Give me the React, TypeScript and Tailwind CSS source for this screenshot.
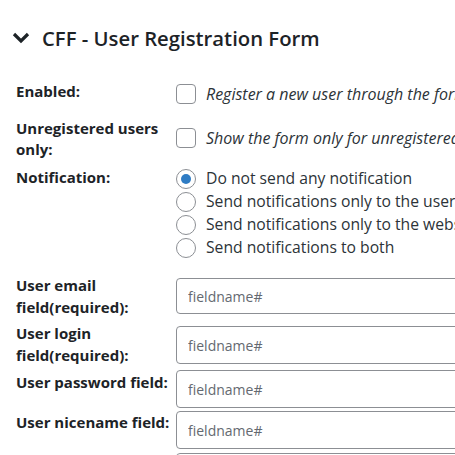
import React from "react";

const FONT = { fontFamily: '"Open Sans", "Noto Sans", sans-serif' };

function Checkbox() {
  return (
    <span className="block h-[20px] w-[20px] shrink-0 rounded-[4px] border border-[#8c8f94] bg-white" />
  );
}

function Radio({ checked }: { checked?: boolean }) {
  return (
    <span className="flex h-[20px] w-[20px] shrink-0 items-center justify-center rounded-full border border-[#8c8f94] bg-white">
      {checked && <span className="block h-[10px] w-[10px] rounded-full bg-[#2f7cc4]" />}
    </span>
  );
}

function Field({ mt, h }: { mt: string; h: string }) {
  return (
    <input
      type="text"
      placeholder="fieldname#"
      className={`${mt} ${h} w-[300px] shrink-0 rounded-[4px] border border-[#8c8f94] bg-white px-[11px] text-[14px] text-[#2c3338] outline-none placeholder:text-[#646970]`}
    />
  );
}

const NOTIFY = [
  "Do not send any notification",
  "Send notifications only to the user",
  "Send notifications only to the website administrator",
  "Send notifications to both",
];

export default function App() {
  return (
    <div className="h-[455px] w-[455px] overflow-hidden bg-white text-[#1d2327]" style={FONT}>
      {/* header */}
      <div className="flex h-[80px] items-start pl-[12px] pt-[23px]">
        <svg width="18" height="12" viewBox="0 0 18 12" className="mt-[9px]">
          <polyline points="2,2 9,9 16,2" fill="none" stroke="#1d2327" strokeWidth="3.2" strokeLinejoin="miter" />
        </svg>
        <h2 className="ml-[12px] whitespace-nowrap text-[20.3px] font-semibold leading-[30px]">
          CFF - User Registration Form
        </h2>
      </div>

      <div className="pl-[16px]">
        {/* enabled */}
        <div className="flex h-[38px] items-start">
          <div className="w-[160px] shrink-0 text-[15px] font-bold leading-[22px]">Enabled:</div>
          <div className="mt-[4px] flex items-center gap-[10px] whitespace-nowrap">
            <Checkbox />
            <span className="text-[16px] italic leading-[20px] text-[#2c3338]">
              Register a new user through the form
            </span>
          </div>
        </div>

        {/* unregistered */}
        <div className="flex h-[48px] items-start">
          <div className="w-[160px] shrink-0 text-[15px] font-bold leading-[21px]">
            Unregistered users
            <br />
            only:
          </div>
          <div className="mt-[10px] flex items-center gap-[10px] whitespace-nowrap">
            <Checkbox />
            <span className="text-[16px] italic leading-[20px] text-[#2c3338]">
              Show the form only for unregistered users
            </span>
          </div>
        </div>

        {/* notification */}
        <div className="flex h-[108px] items-start">
          <div className="w-[160px] shrink-0 text-[15px] font-bold leading-[22px]">Notification:</div>
          <div className="mt-[1px] flex flex-col whitespace-nowrap">
            {NOTIFY.map((t, i) => (
              <label key={t} className="flex h-[23px] items-center gap-[10px] text-[15.7px] text-[#2c3338]">
                <Radio checked={i === 0} />
                <span className="leading-[23px]">{t}</span>
              </label>
            ))}
          </div>
        </div>

        {/* email */}
        <div className="flex h-[48px] items-start">
          <div className="w-[160px] shrink-0 text-[15px] font-bold leading-[22px]">
            User email
            <br />
            field(required):
          </div>
          <Field mt="mt-[4px]" h="h-[36px]" />
        </div>

        {/* login */}
        <div className="flex h-[48px] items-start">
          <div className="w-[160px] shrink-0 text-[15px] font-bold leading-[22px]">
            User login
            <br />
            field(required):
          </div>
          <Field mt="mt-[4px]" h="h-[38px]" />
        </div>

        {/* password */}
        <div className="flex h-[41px] items-start">
          <div className="mt-[1px] w-[160px] shrink-0 whitespace-nowrap text-[15px] font-bold leading-[22px]">
            User password field:
          </div>
          <Field mt="mt-0" h="h-[38px]" />
        </div>

        {/* nicename */}
        <div className="flex h-[42px] items-start">
          <div className="w-[160px] shrink-0 whitespace-nowrap text-[15px] font-bold leading-[22px]">
            User nicename field:
          </div>
          <Field mt="mt-0" h="h-[38px]" />
        </div>

        {/* next row, cut off */}
        <div className="flex h-[42px] items-start">
          <div className="w-[160px] shrink-0 whitespace-nowrap text-[15px] font-bold leading-[22px]">
            User first name field:
          </div>
          <Field mt="mt-0" h="h-[38px]" />
        </div>
      </div>
    </div>
  );
}
